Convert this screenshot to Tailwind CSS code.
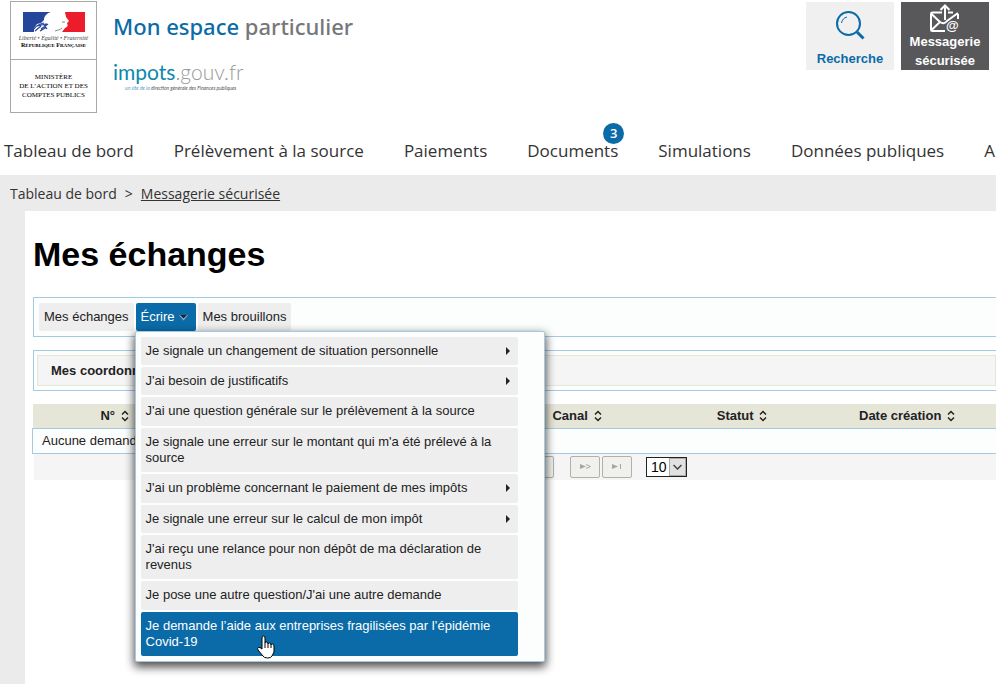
<!DOCTYPE html>
<html lang="fr">
<head>
    <meta charset="UTF-8">
    <meta name="viewport" content="width=device-width, initial-scale=1.0">
    <title>Mes échanges - Mon espace particulier</title>
    <script src="https://cdn.jsdelivr.net/npm/@tailwindcss/browser@4"></script>
</head>
<body class="flex min-h-screen flex-col overflow-x-hidden bg-white font-['Liberation_Sans',Arial,sans-serif] text-[13px] leading-4 text-[#222222]">
    <svg class="hidden">
        <symbol id="sort" viewBox="0 0 8 12"><path d="M1 4.500 4 1.500 7 4.500M1 7.500 4 10.500 7 7.500" fill="none" stroke="#222" stroke-width="1.500"/></symbol>
    </svg>

    <header class="flex items-start justify-between pr-[7px] pl-[10px]">
        <div class="flex">
            <div class="mt-px w-[87px] border border-[#a8a8a8] text-center font-['Liberation_Serif',serif] text-black">
                <div class="flex h-[58px] flex-col items-center border-b border-[#a8a8a8] pt-[9px]">
                    <svg class="h-[22px] w-[64px]" viewBox="0 0 64 22">
                        <path d="M1 1H29C25 2 22 5 22 9L19 12 15 13 12 17V21H1Z" fill="#25479b"/>
                        <path d="M43 1H63V21H40L43 17C46 16 46 14 45 12L47 10 44 6Z" fill="#ed1c2b"/>
                        <path d="M12 18C15 13 19 13 22 12M15 15 24 13 23 17 18 20M13 20 19 15M19 18 26 13M22 14 25 18" fill="none" stroke="#25479b" stroke-width="1.200"/>
                        <path d="M40 11h3M33 20c3-1 5-1 7-3" fill="none" stroke="#888" stroke-width="1"/>
                    </svg>
                    <p class="mt-0.5 text-[6px] leading-[7px] whitespace-nowrap text-[#444444] italic">Liberté • Égalité • Fraternité</p>
                    <p class="text-[6px] leading-[7px] font-bold whitespace-nowrap">R<span class="text-[5px]">ÉPUBLIQUE</span> F<span class="text-[5px]">RANÇAISE</span></p>
                </div>
                <p class="pt-[13px] pb-3 text-[7px] leading-[9px] whitespace-nowrap">MINISTÈRE<br>DE L’ACTION ET DES<br>COMPTES PUBLICS</p>
            </div>
            <div class="pt-[10px] pl-4 whitespace-nowrap">
                <p class="font-['Noto_Sans','Open_Sans',sans-serif] text-[22px] leading-8 font-medium text-[#75787b]"><span class="text-[#0b6ba8]">Mon espace</span> particulier</p>
                <p class="mt-4 font-['Lato',sans-serif] text-[21px] leading-7 font-light text-[#999999]"><span class="font-normal text-[#0e88ad]">impots</span>.gouv.fr</p>
                <p class="pl-3 font-['Lato',sans-serif] text-[5px] leading-1 text-[#555555] italic"><span class="text-[#5b9bc8]">un site de la</span> direction générale des Finances publiques</p>
            </div>
        </div>
        <div class="flex gap-[7px] pt-0.5 text-center leading-[19px] font-bold">
            <button class="flex h-[68px] w-[88px] flex-col items-center justify-between bg-[#f0f0f0] pt-2 pb-0.5 text-[#0b6ba8]">
                <svg class="size-8" viewBox="0 0 32 32" fill="none" stroke="#0b6ba8"><circle cx="14.500" cy="13.500" r="11.500" stroke-width="2"/><path d="M23 22 29.500 28.500" stroke-width="3"/><path d="M7.500 13C8 10 10 7.500 13 7" stroke-width="1"/></svg>
                Recherche
            </button>
            <button class="flex h-[68px] w-[88px] flex-col items-center justify-between bg-[#58585a] pt-0.5 text-white">
                <svg class="h-7 w-[30px]" viewBox="0 0 30 28" fill="none" stroke="white" stroke-width="2">
                    <path d="M12 8.500H2.500Q1 8.500 1 10V25.500Q1 27 2.500 27H15M18 8.500H23M28 10V15M1.500 10 10 18 1.500 26M10 18Q14 21 17 17L28 9M15 16V2M10.500 6 15 1.500 19.500 6"/>
                    <text x="16" y="26" fill="white" stroke="none" font-size="13" font-weight="bold">@</text>
                </svg>
                <span>Messagerie<br>sécurisée</span>
            </button>
        </div>
    </header>

    <nav class="flex h-[62px] gap-10 overflow-hidden pt-[26px] pl-1 font-['Open_Sans',sans-serif] text-[17px] leading-6 whitespace-nowrap text-[#333333]">
        <a href="#">Tableau de bord</a>
        <a href="#">Prélèvement à la source</a>
        <a href="#">Paiements</a>
        <a href="#" class="relative">Documents<span class="absolute -top-4 -right-1.5 size-[21px] rounded-full bg-[#0b6ba8] text-center text-[13px] leading-5 font-semibold text-white">3</span></a>
        <a href="#">Simulations</a>
        <a href="#">Données publiques</a>
        <a href="#">Autres services</a>
    </nav>

    <div class="flex grow flex-col overflow-x-hidden bg-[#ebebeb]">
        <div class="flex h-9 items-center gap-2 pt-0.5 pl-[10px] font-['Open_Sans',sans-serif] text-sm text-[#333333]">
            <a href="#">Tableau de bord</a><span>&gt;</span><a href="#" class="underline">Messagerie sécurisée</a>
        </div>

        <main class="-mr-1 ml-[25px] grow bg-white pl-2">
            <h1 class="pt-[23px] text-[34px] leading-10 font-bold text-black">Mes échanges</h1>

            <div class="mt-[23px] flex gap-0.5 border border-[#a6c9e2] bg-[#fcfdfd] p-[5px]">
                <button class="h-7 rounded-xs bg-[#eeeeee] px-[5px]">Mes échanges</button>
                <div class="relative">
                    <button class="flex h-7 w-[60px] items-center gap-1 rounded-xs bg-[#0b6ba8] px-[5px] text-white">Écrire
                        <svg class="h-[7px] w-[9px]" viewBox="0 0 9 7"><path d="M0 1H9L4.500 6.500Z" fill="#8ab4d2"/><path d="M1 1H8L4.500 4.500Z" fill="#222"/></svg>
                    </button>
                    <!-- Sous-menu Écrire -->
                    <ul class="absolute top-7 -left-px z-10 flex w-[410px] flex-col gap-0.5 rounded-xs border border-[#a6c9e2] bg-[#fcfdfd] py-[5px] pr-[26px] pl-[5px] shadow-[0_4px_10px_1px_rgba(0,0,0,0.7)]">
                        <li><a href="#" class="flex items-center justify-between rounded-xs bg-[#eeeeee] py-1.5 pr-2 pl-[5px]">Je signale un changement de situation personnelle<svg class="h-2 w-1" viewBox="0 0 4 8"><path d="M0 0 4 4 0 8Z" fill="#222"/></svg></a></li>
                        <li><a href="#" class="flex items-center justify-between rounded-xs bg-[#eeeeee] py-1.5 pr-2 pl-[5px]">J'ai besoin de justificatifs<svg class="h-2 w-1" viewBox="0 0 4 8"><path d="M0 0 4 4 0 8Z" fill="#222"/></svg></a></li>
                        <li><a href="#" class="block rounded-xs bg-[#eeeeee] pt-1.5 pr-5 pb-[7px] pl-[5px]">J'ai une question générale sur le prélèvement à la source</a></li>
                        <li><a href="#" class="block rounded-xs bg-[#eeeeee] py-1.5 pr-5 pl-[5px]">Je signale une erreur sur le montant qui m'a été prélevé à la source</a></li>
                        <li><a href="#" class="flex items-center justify-between rounded-xs bg-[#eeeeee] pt-1.5 pr-2 pb-[7px] pl-[5px]">J'ai un problème concernant le paiement de mes impôts<svg class="h-2 w-1" viewBox="0 0 4 8"><path d="M0 0 4 4 0 8Z" fill="#222"/></svg></a></li>
                        <li><a href="#" class="flex items-center justify-between rounded-xs bg-[#eeeeee] py-1.5 pr-2 pl-[5px]">Je signale une erreur sur le calcul de mon impôt<svg class="h-2 w-1" viewBox="0 0 4 8"><path d="M0 0 4 4 0 8Z" fill="#222"/></svg></a></li>
                        <li><a href="#" class="block rounded-xs bg-[#eeeeee] py-1.5 pr-5 pl-[5px]">J'ai reçu une relance pour non dépôt de ma déclaration de revenus</a></li>
                        <li><a href="#" class="block rounded-xs bg-[#eeeeee] pt-1.5 pr-5 pb-[7px] pl-[5px]">Je pose une autre question/J'ai une autre demande</a></li>
                        <li class="relative">
                            <a href="#" class="block rounded-xs bg-[#0b6ba8] py-1.5 pr-5 pl-[5px] text-white">Je demande l’aide aux entreprises fragilisées par l’épidémie Covid-19</a>
                            <svg class="absolute top-[23px] left-[115px] h-[24px] w-[19px]" viewBox="0 0 19 24"><path d="M6 14V3Q6 1 7.500 1T9 3V8Q9 7 10.500 7T12 9Q12 8 13.500 8T15 10Q15 9 16.500 9T18 11V17L16 21Q15 23 11.500 23T7 21L2 15Q1 13 2.500 12.500T6 14Z" fill="white" stroke="black"/><path d="M9 8V13M12 9V13M15 10V13" stroke="black"/></svg>
                        </li>
                    </ul>
                </div>
                <button class="h-7 rounded-xs bg-[#eeeeee] px-[5px]">Mes brouillons</button>
            </div>

            <section class="mt-[13px] border border-[#a6c9e2] bg-[#fcfdfd] px-[3px] py-1">
                <h2 class="border border-[#e5e5d8] bg-[#f5f5f5] px-[13px] pt-[7px] pb-1.5 font-bold">Mes coordonnées</h2>
            </section>

            <div class="-ml-px mt-[13px]">
                <table class="w-full table-fixed border-collapse">
                    <thead>
                        <tr class="h-6 bg-[#e5e5d8]">
                            <th class="w-[164px]">N° <svg class="ml-0.5 inline h-3 w-2"><use href="#sort"/></svg></th>
                            <th class="w-[298px]"></th>
                            <th class="w-[165px]">Canal <svg class="ml-0.5 inline h-3 w-2"><use href="#sort"/></svg></th>
                            <th class="w-[165px]">Statut <svg class="ml-0.5 inline h-3 w-2"><use href="#sort"/></svg></th>
                            <th class="w-[165px]">Date création <svg class="ml-0.5 inline h-3 w-2"><use href="#sort"/></svg></th>
                            <th></th>
                        </tr>
                    </thead>
                    <tbody>
                        <tr><td colspan="6" class="h-[25px] border border-[#a6c9e2] bg-[#fcfdfd] pl-[9px]">Aucune demande</td></tr>
                    </tbody>
                </table>
            </div>
            <div class="ml-px flex h-[26px] items-center gap-0.5 bg-[#f5f5f5] pl-[490px]">
                <button class="h-[22px] w-[30px] rounded-xs border border-[#b0b0ac] bg-[#f0f0ec]" aria-label="1"></button>
                <button class="ml-3.5 flex h-[22px] w-[30px] items-center justify-center rounded-xs border border-[#b0b0ac] bg-[#f0f0ec]" aria-label="Page suivante">
                    <svg class="h-[5px] w-[11px]" viewBox="0 0 11 5"><path d="M0 0 6 2.500 0 5Z" fill="#a5a5a5"/><path d="M6 .5 10.500 2.500 6 4.500" fill="none" stroke="#a5a5a5"/></svg>
                </button>
                <button class="flex h-[22px] w-[30px] items-center justify-center rounded-xs border border-[#b0b0ac] bg-[#f0f0ec]" aria-label="Dernière page">
                    <svg class="h-[5px] w-[10px]" viewBox="0 0 10 5"><path d="M0 0 6 2.500 0 5Z" fill="#a5a5a5"/><path d="M8.500 0V5" stroke="#a5a5a5"/></svg>
                </button>
                <div class="relative ml-3">
                    <select aria-label="Lignes par page" class="block h-5 w-[41px] appearance-none border border-[#222222] bg-white pl-1 text-sm leading-4 text-black"><option>10</option></select>
                    <span class="pointer-events-none absolute inset-y-px right-px flex w-[17px] items-center justify-center border border-[#aaaaaa] bg-[#e1e1e1]">
                        <svg class="h-[6px] w-[9px]" viewBox="0 0 9 6"><path d="M.5 1 4.500 5 8.500 1" fill="none" stroke="#444" stroke-width="1.500"/></svg>
                    </span>
                </div>
            </div>
        </main>
    </div>
</body>
</html>
